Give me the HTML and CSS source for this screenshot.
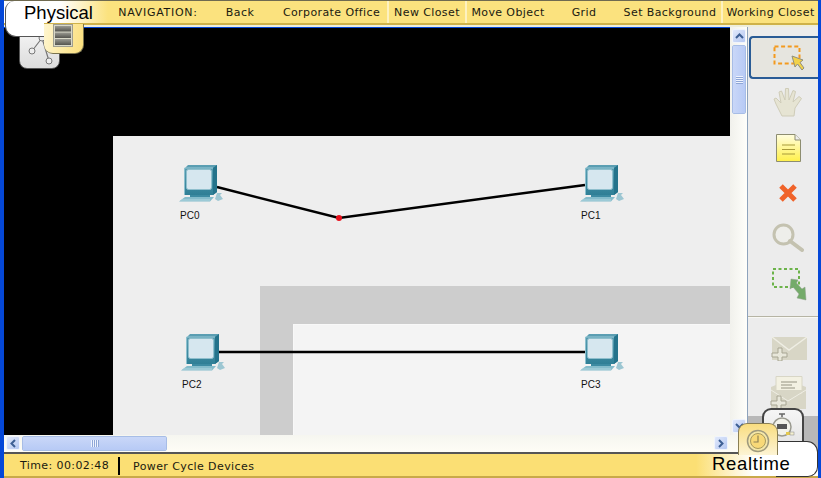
FILE: index.html
```html
<!DOCTYPE html>
<html lang="en">
<head>
<meta charset="utf-8">
<title>Physical workspace</title>
<link rel="stylesheet" href="styles.css">
</head>
<body>
<svg class="defs" width="0" height="0">
  <symbol id="pc" viewBox="0 0 44 38">
    <defs><linearGradient id="mon" x1="0" y1="0" x2="0" y2="1"><stop offset="0" stop-color="#5c9fb3"/><stop offset="1" stop-color="#2f7f96"/></linearGradient></defs>
    <path d="M6 4 L9 1 H38 V28 L34 31 H6 Z" fill="url(#mon)"/>
    <path d="M34 4 L38 1 V28 L34 31 Z" fill="#24738b"/>
    <path d="M5.500 4 H34" stroke="#9ccbd8"/>
    <path d="M5.500 4 V31" stroke="#8cc0ce"/>
    <rect x="7.500" y="5.500" width="25" height="20" rx="2" fill="#d6e7ef" stroke="#8fbfcd"/>
    <path d="M11 31 H31 V33 H11 Z" fill="#3d8ba2"/>
    <path d="M6 33 H35 L31 37.500 H0 Z" fill="#84bccb"/>
    <path d="M2 36 H31" stroke="#b4d8e1"/>
    <path d="M38 29 L43 29 L41 31 L44 35 L39 37 L36 35 Z" fill="#9cc6d2"/>
  </symbol>
  <symbol id="env" viewBox="0 0 37 25">
    <path d="M1 1 H36 V24 H1 Z" fill="#d8d6c6"/>
    <path d="M1 1 L18 14 L36 1" fill="none" stroke="#efeee4" stroke-width="1.500"/>
    <path d="M7 12 H11 V17 H16 V21 H11 V25 H7 V21 H1 V17 H7 Z" fill="#e8e7da" stroke="#a8a693"/>
  </symbol>
</svg>
<div class="window">
  <nav class="nav">
    <span class="nav-label">NAVIGATION:</span>
    <span class="nav-item">Back</span>
    <span class="nav-item nav-corp">Corporate Office</span>
    <span class="nav-item nav-sep">New Closet</span>
    <span class="nav-item nav-sep">Move Object</span>
    <span class="nav-item">Grid</span>
    <span class="nav-item">Set Background</span>
    <span class="nav-item nav-sep">Working Closet</span>
  </nav>

  <main class="main">
    <div class="canvas">
      <div class="floor"></div>
      <div class="wall"></div>
      <div class="room"></div>
      <svg class="links" width="726" height="408">
        <path d="M213 160 L335 191 L581 158" fill="none" stroke="#000" stroke-width="2.400"/>
        <path d="M214 325 H581" fill="none" stroke="#000" stroke-width="2.600"/>
        <circle cx="335" cy="191" r="3" fill="#e8101c"/>
      </svg>
      <div class="node node-pc0"><svg class="pc-icon"><use href="#pc"/></svg><span class="node-name">PC0</span></div>
      <div class="node node-pc1"><svg class="pc-icon"><use href="#pc"/></svg><span class="node-name">PC1</span></div>
      <div class="node node-pc2"><svg class="pc-icon"><use href="#pc"/></svg><span class="node-name">PC2</span></div>
      <div class="node node-pc3"><svg class="pc-icon"><use href="#pc"/></svg><span class="node-name">PC3</span></div>
    </div>

    <div class="vscroll">
      <div class="sb-btn"><svg width="9" height="6" viewBox="0 0 9 6"><path d="M1 5 L4.500 1.500 L8 5" fill="none" stroke="#3d5f94" stroke-width="2"/></svg></div>
      <div class="thumb thumb-v"><span class="grip-v"></span></div>
      <div class="sb-fill"></div>
      <div class="sb-btn"><svg width="9" height="6" viewBox="0 0 9 6"><path d="M1 1 L4.500 4.500 L8 1" fill="none" stroke="#3d5f94" stroke-width="2"/></svg></div>
    </div>

    <aside class="tools">
      <div class="tool tool-active">
        <svg width="32" height="26" viewBox="0 0 32 26"><rect x="1.500" y="1.500" width="25" height="17" fill="none" stroke="#f39a1e" stroke-width="2" stroke-dasharray="4 2.600"/><path d="M19 11 L22 22 L24.500 19 L29 25 L31 23 L27 17.500 L30 15 Z" fill="#f2d24a" stroke="#8f8f80"/></svg>
      </div>
      <div class="tool">
        <svg width="30" height="30" viewBox="0 0 30 30"><path d="M9 29 L3 17 L1 12 L3 11 L8 16 L6 5 L8.500 4 L12 13 L12.500 1.500 L15.500 1.500 L16 13 L20 3.500 L22.500 4.500 L20 15 L26 9.500 L28.500 11.500 L22 21 L21 29 Z" fill="#e6e4d3" stroke="#cfccb8"/></svg>
      </div>
      <div class="tool tool-note">
        <svg width="25" height="28" viewBox="0 0 25 28"><defs><linearGradient id="note" x1="0" y1="0" x2="0" y2="1"><stop offset="0" stop-color="#fffde0"/><stop offset="1" stop-color="#fff04a"/></linearGradient></defs><path d="M.5 .5 H19 L24.500 6 V27.500 H.5 Z" fill="url(#note)" stroke="#8d8d70"/><path d="M19 .5 V6 H24.500" fill="#eee" stroke="#8d8d70"/><path d="M6 11 H19 M6 15.500 H19 M6 20 H19" stroke="#a89a3a" stroke-width="1.200"/></svg>
      </div>
      <div class="tool">
        <svg width="20" height="20" viewBox="0 0 20 20"><path d="M3 3 L17 17 M17 3 L3 17" stroke="#f0632a" stroke-width="5"/></svg>
      </div>
      <div class="tool tool-short">
        <svg width="32" height="29" viewBox="0 0 32 29"><circle cx="11.500" cy="11.500" r="9.500" fill="#eeeeea" stroke="#c4c2b0" stroke-width="3"/><path d="M18 18 L30 27" stroke="#c4c2b0" stroke-width="4" stroke-linecap="round"/></svg>
      </div>
      <div class="tool tool-green">
        <svg width="35" height="33" viewBox="0 0 35 33"><rect x="1" y="1" width="26" height="18" fill="none" stroke="#6cb34a" stroke-width="2" stroke-dasharray="3 2.500"/><path d="M19 11 L26 12 L24.500 15 L30 21 L33 19 L34 32 L25 30 L27 26 L21 19 L18 21 Z" fill="#74ab6a" stroke="#8f9f8a" stroke-width=".5"/></svg>
      </div>
      <div class="tool-rule"></div>
      <div class="tool env-one"><svg class="env-icon"><use href="#env"/></svg></div>
      <div class="tool env-two">
        <svg width="37" height="33" viewBox="0 0 37 33"><path d="M1 11 L18 4 L36 11 V33 H1 Z" fill="#d8d6c6"/><path d="M6 .5 H32 V18 H6 Z" fill="#f3f1e2" stroke="#d8d6c6"/><path d="M11 6 H27 M11 9 H22 M11 12 H25" stroke="#b5b3a2" stroke-width="1.500"/><path d="M1 14 L18 25 L36 14" fill="#d8d6c6" stroke="#efeee4"/><path d="M7 20 H11 V25 H16 V29 H11 V33 H7 V29 H1 V25 H7 Z" fill="#e8e7da" stroke="#a8a693"/></svg>
      </div>
      <div class="tool-band"></div>
    </aside>

    <div class="hscroll">
      <div class="sb-btn"><svg width="6" height="9" viewBox="0 0 6 9"><path d="M5 1 L1.500 4.500 L5 8" fill="none" stroke="#3d5f94" stroke-width="2"/></svg></div>
      <div class="thumb thumb-h"><span class="grip-h"></span></div>
      <div class="sb-fill"></div>
      <div class="sb-btn"><svg width="6" height="9" viewBox="0 0 6 9"><path d="M1 1 L4.500 4.500 L1 8" fill="none" stroke="#3d5f94" stroke-width="2"/></svg></div>
    </div>
  </main>

  <footer class="status">
    <span class="status-time">Time: 00:02:48</span>
    <span class="status-cycle">Power Cycle Devices</span>
  </footer>

  <div class="tab-logical">
    <svg width="34" height="34" viewBox="0 0 34 34"><path d="M19 3 L9 16 M19 3 L26 26" stroke="#777" stroke-width="1.200"/><circle cx="19" cy="3" r="3" fill="#eee" stroke="#777"/><circle cx="9" cy="16" r="3" fill="#eee" stroke="#777"/><circle cx="26" cy="26" r="3" fill="#eee" stroke="#777"/></svg>
  </div>
  <div class="tab-physical-label">Physical</div>
  <div class="tab-physical-icon">
    <svg width="20" height="23" viewBox="0 0 20 23"><defs><linearGradient id="bar" x1="0" y1="0" x2="0" y2="1"><stop offset="0" stop-color="#9a9a92"/><stop offset="1" stop-color="#55554f"/></linearGradient></defs><rect x=".5" y=".5" width="19" height="22" fill="#d8d8c8" stroke="#a09f90"/><rect x="2" y="2" width="16" height="5.500" fill="url(#bar)"/><rect x="2" y="8.500" width="16" height="5.500" fill="url(#bar)"/><rect x="2" y="15" width="16" height="6" fill="url(#bar)"/></svg>
  </div>

  <div class="tab-sim">
    <svg width="24" height="30" viewBox="0 0 24 30"><path d="M8 2 H14 M11 2 V5" stroke="#666" stroke-width="1.500"/><circle cx="11" cy="15" r="9" fill="#f2f2ea" stroke="#9a9a90" stroke-width="1.500"/><rect x="6" y="12" width="10" height="5" fill="#555"/><rect x="15" y="20" width="4" height="3" fill="#e4c94e"/><rect x="19" y="20" width="4" height="3" fill="#f4f0d0" stroke="#888" stroke-width=".5"/></svg>
  </div>
  <div class="tab-real-white"></div>
  <div class="tab-real-icon">
    <svg width="24" height="24" viewBox="0 0 24 24"><circle cx="12" cy="12" r="10.500" fill="#f4e7a8" stroke="#9f9a7e" stroke-width="1.500"/><circle cx="12" cy="12" r="7.500" fill="#f8d978" stroke="#a89a5e"/><path d="M12 6.500 V13 H7.500" fill="none" stroke="#8f8254" stroke-width="1.200"/></svg>
  </div>
  <div class="tab-real-label">Realtime</div>
</div>
</body>
</html>
```
FILE: styles.css
```css
* { box-sizing: border-box; }
html, body { margin: 0; padding: 0; }
body { width: 821px; height: 478px; overflow: hidden; background: #0548d8; font-family: "DejaVu Sans", sans-serif; }
.defs { position: absolute; }

.window {
  position: relative;
  width: 821px;
  height: 478px;
  padding: 0 3px 0 4px;
  display: grid;
  grid-template-rows: 27px 425px 26px;
  background: #0548d8;
  overflow: hidden;
}

/* Top navigation */
.nav {
  display: grid;
  grid-template-columns: 104px 100px 64px 115px 78px 84px 70px 102px 97px;
  align-items: stretch;
  font-size: 11px;
  color: #1a1a10;
  letter-spacing: .4px;
  background: linear-gradient(90deg, #fff 0, #fff 56px, #fbe27e 104px, #fbe27e 100%);
  border-top: 1px solid #6f6a50;
  border-bottom: 2px solid #eeeedc;
  box-shadow: inset 0 -2px 0 #cfb24a;
  padding-bottom: 2px;
}
.nav-label { grid-column: 2; display: flex; align-items: center; justify-content: center; letter-spacing: .7px; }
.nav-item { display: flex; align-items: center; justify-content: center; }
.nav-corp { padding-left: 4px; }
.nav-sep { border-left: 2px solid #fdf1c0; }

/* Main */
.main {
  display: grid;
  grid-template-columns: 726px 17px 71px;
  grid-template-rows: 408px 17px;
}
.canvas { position: relative; background: #000; overflow: hidden; margin-top: 1px; }
.floor { position: absolute; left: 109px; top: 108px; right: 0; bottom: 0; background: #eeeeee; }
.wall { position: absolute; left: 256px; top: 258px; right: 0; bottom: 0; background: #cdcdcd; }
.room { position: absolute; left: 289px; top: 296px; right: 0; bottom: 0; background: #f4f4f4; border-left: 1px solid #f8f8f8; border-top: 1px solid #f8f8f8; }
.links { position: absolute; left: 0; top: -1px; }

.node { position: absolute; width: 44px; display: flex; flex-direction: column; }
.node-pc0 { left: 175px; top: 136px; }
.node-pc1 { left: 576px; top: 136px; }
.node-pc2 { left: 177px; top: 305px; }
.node-pc3 { left: 576px; top: 305px; }
.pc-icon { width: 44px; height: 38px; display: block; }
.node-name { margin-top: 8px; padding-left: 1px; font: 10px/12px "Liberation Sans", sans-serif; color: #111; }

/* Scrollbars */
.vscroll {
  display: flex;
  flex-direction: column;
  padding: 2px 1px 2px 2px;
  gap: 2px;
  background: linear-gradient(90deg, #f1f1ec, #fefefa);
}
.hscroll {
  grid-column: 1 / span 2;
  display: flex;
  padding: 1px 19px 1px 2px;
  gap: 2px;
  background: linear-gradient(180deg, #f6f6f0, #fefdf6);
}
.sb-btn {
  flex: none;
  width: 14px;
  height: 14px;
  display: flex;
  align-items: center;
  justify-content: center;
  background: linear-gradient(135deg, #e1e9fb, #b5c8f2);
  border: 1px solid #f0f4fd;
  border-radius: 2px;
}
.thumb {
  flex: none;
  display: flex;
  align-items: center;
  justify-content: center;
  border: 1px solid #f4f7fe;
  outline: 1px solid #a7bde6;
  outline-offset: -1px;
  border-radius: 2px;
}
.thumb-v { height: 69px; background: linear-gradient(90deg, #c9d7f8, #b7caf5); width: 14px; }
.thumb-h { width: 145px; height: 15px; background: linear-gradient(180deg, #c9d7f8, #b7caf5); }
.grip-v { width: 7px; height: 8px; background: repeating-linear-gradient(180deg, #eef3fe 0 1px, #8ea6d6 1px 2px); }
.grip-h { width: 8px; height: 7px; background: repeating-linear-gradient(90deg, #eef3fe 0 1px, #8ea6d6 1px 2px); }
.sb-fill { flex: 1; }

/* Tools */
.tools {
  grid-column: 3;
  grid-row: 1 / span 2;
  display: flex;
  flex-direction: column;
  padding-top: 9px;
  background: #ececec;
  border-left: 1px solid #8ea3bc;
}
.tool { flex: none; height: 46px; display: flex; align-items: center; justify-content: center; padding-left: 10px; }
.tool-active { height: 43px; margin-left: 1px; background: #e6e5df; border: 2px solid #2a5c96; border-right: none; border-radius: 4px 0 0 4px; padding-left: 8px; }
.tool-note { height: 45px; }
.tool-short { height: 43px; }
.tool-green { height: 50px; padding-left: 12px; }
.tool-rule { height: 2px; margin-top: 7px; background: #b6b4a4; border-bottom: 1px solid #f8f8f4; }
.env-one { height: 33px; margin-top: 14px; padding-left: 12px; }
.env-two { height: 44px; margin-top: 5px; padding-left: 10px; }
.env-icon { width: 37px; height: 25px; display: block; }
.tool-band { flex: 1; margin-top: 2px; background: #b8b8b8; }

/* Status */
.status {
  padding: 2px 0 0;
  display: flex;
  align-items: center;
  font-size: 11px;
  letter-spacing: .4px;
  color: #1a1a10;
  border-top: 2px solid #555;
  border-bottom: 2px solid #c9a94a;
  background: linear-gradient(90deg, #fbdf74 0, #fbdf74 692px, #fff 750px);
}
.status-time { margin-left: 16px; width: 100px; height: 18px; line-height: 18px; border-right: 2px solid #000; }
.status-cycle { margin-left: 13px; }

/* Corner tabs that lie over the workspace */
.tab-logical {
  position: absolute; left: 19px; top: 31px; width: 41px; height: 38px;
  display: flex; align-items: center; justify-content: center; padding-top: 4px;
  background: linear-gradient(180deg, #f4f4f4, #dcdcdc);
  border: 1px solid #555; border-radius: 0 0 8px 8px;
}
.tab-physical-label {
  position: absolute; left: 5px; top: 1px; width: 39px; height: 36px;
  padding: 0 0 0 18px;
  font: 18.500px/24px "Liberation Sans", sans-serif; color: #000; white-space: nowrap;
  background: #fff;
  border: 1px solid #555; border-width: 0 0 1px 1px; border-radius: 9px 0 0 11px;
}
.tab-physical-icon {
  position: absolute; left: 44px; top: 24px; width: 40px; height: 30px;
  display: flex; justify-content: center; padding-right: 1px;
  background: linear-gradient(100deg, #fff6cf, #fbdf7c);
  border: 1px solid #7a7450; border-width: 0 1px 1px 0; border-radius: 0 0 9px 9px;
}
.tab-sim {
  position: absolute; left: 762px; top: 408px; width: 42px; height: 40px;
  display: flex; justify-content: center; padding-top: 2px;
  background: linear-gradient(180deg, #f6f6f6, #e2e2e2);
  border: 2px solid #444; border-bottom: none; border-radius: 9px 9px 0 0;
}
.tab-real-white {
  position: absolute; left: 776px; top: 441px; width: 42px; height: 36px;
  background: #fff;
  border: 1px solid #333; border-left: none; border-radius: 0 11px 10px 0;
}
.tab-real-icon {
  position: absolute; left: 738px; top: 423px; width: 40px; height: 32px;
  display: flex; justify-content: center; padding-top: 5px;
  background: linear-gradient(180deg, #f9dd80, #fdf4d4);
  border: 1px solid #8a7f55; border-width: 1px 1px 0 1px; border-bottom: none; border-radius: 9px 9px 0 0;
}
.tab-real-label {
  position: absolute; left: 712px; top: 452px;
  font: 18.500px/24px "Liberation Sans", sans-serif; color: #000; letter-spacing: .7px;
}
```
